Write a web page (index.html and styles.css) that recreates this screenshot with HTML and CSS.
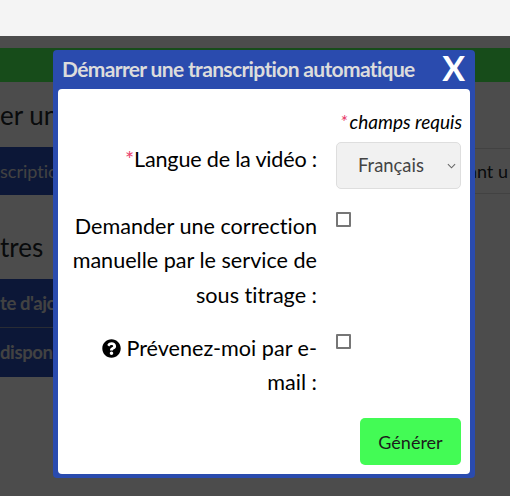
FILE: index.html
```html
<!DOCTYPE html>
<html lang="fr">
<head>
  <meta charset="UTF-8">
  <meta name="viewport" content="width=device-width, initial-scale=1">
  <title>Transcription automatique</title>
  <link rel="stylesheet" href="styles.css">
</head>
<body>
  <!-- page behind the dialog -->
  <div class="top-strip"></div>
  <div class="page">
    <div class="green-bar"></div>
    <h2 class="page-title first">er un</h2>
    <div class="tabs">
      <div class="tab-blue">scriptio</div>
      <div class="tab-plain">ant u</div>
    </div>
    <h2 class="page-title second">tres</h2>
    <div class="side-list">
      <div class="side-item">te d'ajo</div>
      <div class="side-item">disponi</div>
    </div>
  </div>
  <div class="overlay"></div>

  <!-- dialog -->
  <div class="dialog">
    <div class="dialog-head">
      <span class="dialog-title">Démarrer une transcription automatique</span>
      <span class="dialog-close">X</span>
    </div>
    <form class="dialog-body">
      <p class="required-note"><span class="star note-star">*</span>champs requis</p>
      <div class="form-row row-lang">
        <label class="form-label label-lang"><span class="star">*</span>Langue de la vidéo :</label>
        <select class="lang-select">
          <option>Français</option>
        </select>
      </div>
      <div class="form-row row-correction">
        <label class="form-label">Demander une correction manuelle par le service de sous titrage :</label>
        <input type="checkbox" class="check">
      </div>
      <div class="form-row row-mail">
        <label class="form-label">
          <svg class="help-icon" viewBox="0 0 512 512"><path d="M504 256c0 137-111 248-248 248S8 393 8 256 119 8 256 8s248 111 248 248zM262.700 90c-54.500 0-89.300 23-116.500 63.800-3.500 5.300-2.400 12.400 2.700 16.300l34.700 26.300c5.200 3.900 12.600 3 16.700-2.100 17.900-22.700 30.100-35.800 57.300-35.800 20.400 0 45.700 13.100 45.700 32.900 0 15-12.400 22.700-32.500 34-23.500 13.200-54.600 29.600-54.600 70.600V300c0 6.600 5.400 12 12 12h56c6.600 0 12-5.400 12-12v-1.300c0-28.400 83-29.600 83-106.700 0-58-60.200-102-116.500-102zM256 338c-25.400 0-46 20.600-46 46s20.600 46 46 46 46-20.600 46-46-20.600-46-46-46z"/></svg>
          Prévenez-moi par e-mail :
        </label>
        <input type="checkbox" class="check">
      </div>
      <div class="dialog-actions">
        <button type="button" class="btn-generate">Générer</button>
      </div>
    </form>
  </div>
</body>
</html>
```

FILE: styles.css
```css
* {
  box-sizing: border-box;
}

html, body {
  height: 100%;
}

body {
  margin: 0;
  overflow: hidden;
  background: #fff;
  color: #212529;
  font-family: Lato, "Liberation Sans", sans-serif;
  font-variant-ligatures: none;
}

.top-strip {
  height: 36px;
  background: #f4f4f4;
}

.page {
  padding-top: 12px;
}

.green-bar {
  height: 34px;
  background: #4dff57;
}

.page-title {
  margin: 0;
  font-size: 26px;
  font-weight: 400;
  line-height: 32px;
}

.page-title.first {
  margin-top: 17px;
}

.page-title.second {
  margin-top: 36px;
}

.tabs {
  display: flex;
  justify-content: space-between;
  margin-top: 16px;
  height: 48px;
}

.tab-blue {
  width: 300px;
  background: #2a4fb8;
  color: #ddd;
  font-size: 18px;
  line-height: 48px;
}

.tab-plain {
  width: 42px;
  height: 46px;
  margin-top: 1px;
  border-top: 1px solid #ddd;
  border-bottom: 1px solid #ddd;
  font-size: 18px;
  line-height: 44px;
  white-space: nowrap;
}

.side-list {
  margin-top: 16px;
  width: 300px;
  background: #2a4fb8;
}

.side-item {
  height: 49px;
  color: #ddd;
  font-size: 18.5px;
  font-weight: 700;
  letter-spacing: -0.4px;
  line-height: 48px;
  border-bottom: 1px solid #8a94b0;
}

.side-item:last-child {
  border-bottom: 0;
}

.overlay {
  position: absolute;
  top: 36px;
  left: 0;
  right: 0;
  bottom: 0;
  background: rgba(0, 0, 0, 0.7);
}

.dialog {
  position: absolute;
  top: 50px;
  left: 53px;
  width: 422px;
  height: 428px;
  padding: 0 5px 4px;
  background: #2a4bae;
  border-radius: 4px;
}

.dialog-head {
  display: flex;
  justify-content: space-between;
  height: 39px;
  padding: 0 5px;
}

.dialog-title {
  margin-left: -1px;
  color: #dcdcdc;
  font-size: 21px;
  font-weight: 700;
  letter-spacing: -0.65px;
  line-height: 38px;
  white-space: nowrap;
}

.dialog-close {
  color: #fff;
  font-size: 34px;
  font-weight: 700;
  line-height: 36px;
}

.dialog-body {
  height: 385px;
  padding: 22px 9px 0 14px;
  background: #fff;
  border-radius: 4px;
  color: #000;
  font-size: 21.6px;
}

.required-note {
  margin: 0 -1px 0 0;
  font-size: 19px;
  font-style: italic;
  line-height: 22px;
  text-align: right;
}

.star {
  color: #e83e6c;
}

.note-star {
  margin-right: 2px;
}

.form-row {
  display: flex;
  align-items: flex-start;
  gap: 19px;
}

.row-lang {
  margin-top: 9px;
}

.row-correction {
  margin-top: 20px;
}

.row-mail {
  margin-top: 19px;
}

.form-label {
  width: 245px;
  flex: none;
  line-height: 34.3px;
  text-align: right;
}

.label-lang {
  letter-spacing: -0.2px;
}

.help-icon {
  width: 19px;
  height: 19px;
  vertical-align: -2px;
}

.lang-select {
  width: 125px;
  height: 47px;
  padding: 0 0 2px 21px;
  appearance: none;
  background-color: #f1f1f1;
  background-image: url("data:image/svg+xml,%3Csvg xmlns='http://www.w3.org/2000/svg' viewBox='0 0 10 6'%3E%3Cpath d='M1 1l4 4 4-4' fill='none' stroke='%23666' stroke-width='1.2'/%3E%3C/svg%3E");
  background-repeat: no-repeat;
  background-position: right 4px center;
  background-size: 9px 6px;
  border: 1px solid #dedede;
  border-radius: 5px;
  color: #444;
  font-family: inherit;
  font-size: 18.4px;
}

.check {
  width: 15px;
  height: 15px;
  margin: 3px 0 0;
  appearance: none;
  background: #fff;
  border: 2px solid #767676;
  border-radius: 1px;
}

.dialog-actions {
  display: flex;
  justify-content: flex-end;
  margin-top: 19px;
}

.btn-generate {
  width: 101px;
  height: 47px;
  background: #43fb55;
  border: 0;
  border-radius: 5px;
  color: #1b1b1b;
  font-family: inherit;
  font-size: 18px;
}
```
